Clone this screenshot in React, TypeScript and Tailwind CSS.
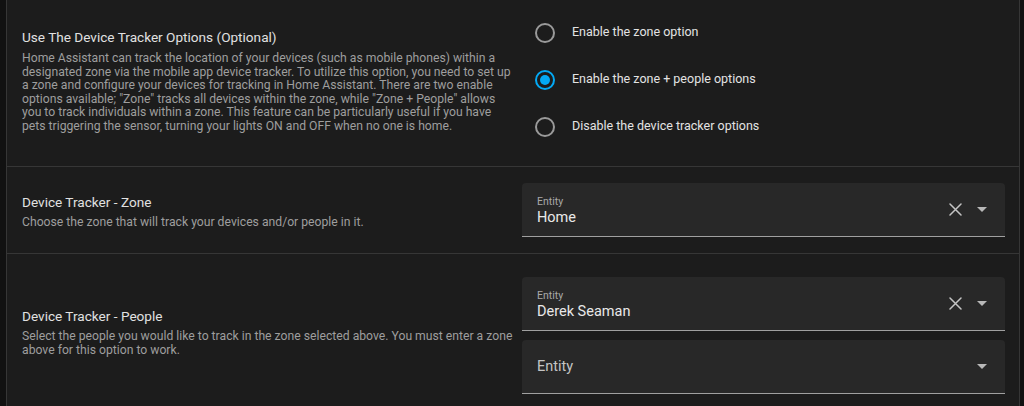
const radios = [
  { label: 'Enable the zone option', checked: false },
  { label: 'Enable the zone + people options', checked: true },
  { label: 'Disable the device tracker options', checked: false },
];

function Caret() {
  return (
    <svg width="10" height="5" viewBox="0 0 10 5" className="shrink-0">
      <path d="M0 0 L10 0 L5 5 Z" fill="#b8b8b8" />
    </svg>
  );
}

function ClearIcon() {
  return (
    <svg width="13" height="13" viewBox="0 0 13 13" className="mr-[15px] shrink-0">
      <path d="M1 1 L12 12 M12 1 L1 12" stroke="#c4c4c4" strokeWidth="1.5" strokeLinecap="round" />
    </svg>
  );
}

function EntityField({ value }: { value?: string }) {
  return (
    <div className="flex h-[54px] items-center rounded-t-[4px] border-b border-[#a0a0a0] bg-[#282828] pl-[15px] pr-[18px]">
      {value ? (
        <div className="flex flex-1 flex-col pt-[4px]">
          <span className="text-[10.5px] leading-[12px] text-[#a8a8a8]">Entity</span>
          <span className="text-[14.5px] leading-[19px] text-[#e8e8e8]">{value}</span>
        </div>
      ) : (
        <span className="flex-1 pt-[1px] text-[14.5px] text-[#c4c4c4]">Entity</span>
      )}
      {value && <ClearIcon />}
      <Caret />
    </div>
  );
}

export default function App() {
  return (
    <div
      className="h-[406px] overflow-hidden bg-[#111111] pl-[6px] pr-[4px]"
      style={{ fontFamily: 'Roboto, "Noto Sans", sans-serif' }}
    >
      <div className="h-full border-l border-r border-[#363636] bg-[#1c1c1c]">
        {/* Device tracker options */}
        <div className="grid h-[167px] grid-cols-[1fr_483px] gap-[7px] border-b border-[#363636] pl-[15px] pr-[14px]">
          <div className="pt-[27px]">
            <h3 className="text-[13.6px] leading-[20px] text-[#e1e1e1]">
              Use The Device Tracker Options (Optional)
            </h3>
            <p className="mt-[5px] text-[12.2px] leading-[13.6px] text-[#9e9e9e]">
              Home Assistant can track the location of your devices (such as mobile phones) within a
              designated zone via the mobile app device tracker. To utilize this option, you need to set up
              a zone and configure your devices for tracking in Home Assistant. There are two enable
              options available; "Zone" tracks all devices within the zone, while "Zone + People" allows
              you to track individuals within a zone. This feature can be particularly useful if you have
              pets triggering the sensor, turning your lights ON and OFF when no one is home.
            </p>
          </div>
          <div className="flex flex-col pt-[9px]">
            {radios.map((r) => (
              <div key={r.label} className="flex h-[47px] items-center">
                <span
                  className={`ml-[13px] flex h-[20px] w-[20px] items-center justify-center rounded-full border-2 ${
                    r.checked ? 'border-[#03a9f4]' : 'border-[#9a9a9a]'
                  }`}
                >
                  {r.checked && <span className="h-[10px] w-[10px] rounded-full bg-[#03a9f4]" />}
                </span>
                <span className="ml-[17px] text-[12.5px] text-[#e3e3e3]">{r.label}</span>
              </div>
            ))}
          </div>
        </div>

        {/* Zone */}
        <div className="grid h-[87px] grid-cols-[1fr_483px] items-center gap-[7px] border-b border-[#363636] pl-[15px] pr-[14px]">
          <div>
            <h3 className="text-[13.6px] leading-[20px] text-[#e1e1e1]">Device Tracker - Zone</h3>
            <p className="mt-[3px] text-[12.2px] leading-[14px] text-[#9e9e9e]">
              Choose the zone that will track your devices and/or people in it.
            </p>
          </div>
          <EntityField value="Home" />
        </div>

        {/* People */}
        <div className="grid grid-cols-[1fr_483px] gap-[7px] pl-[15px] pr-[14px] pt-[23px]">
          <div className="pt-[29px]">
            <h3 className="text-[13.6px] leading-[20px] text-[#e1e1e1]">Device Tracker - People</h3>
            <p className="mt-[3px] text-[12.2px] leading-[14px] text-[#9e9e9e]">
              Select the people you would like to track in the zone selected above. You must enter a zone
              above for this option to work.
            </p>
          </div>
          <div className="flex flex-col gap-[9px]">
            <EntityField value="Derek Seaman" />
            <EntityField />
          </div>
        </div>
      </div>
    </div>
  );
}
